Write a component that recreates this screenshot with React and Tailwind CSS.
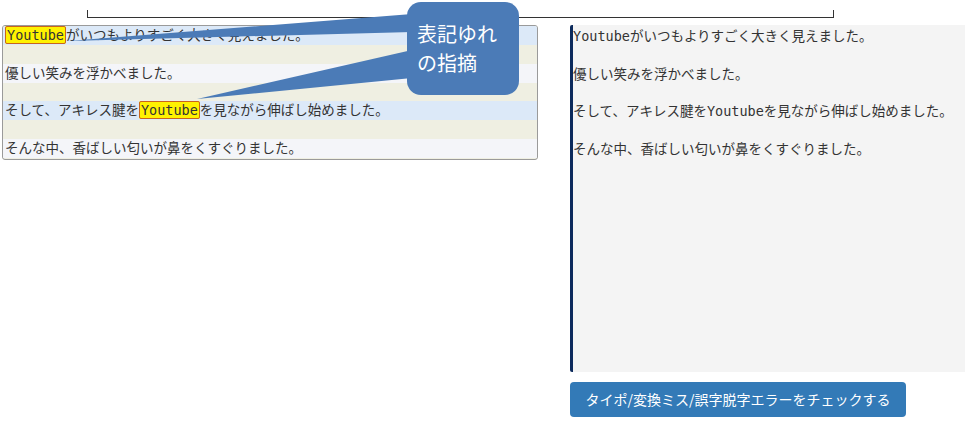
const mono = { fontFamily: '"DejaVu Sans Mono", "Noto Sans CJK JP", monospace' };

function Hl({ children }) {
  return (
    <span className="bg-[#fff200] border border-[#c8641e] rounded-[2px] px-px">{children}</span>
  );
}

const lines = [
  <><Hl>Youtube</Hl>がいつもよりすごく大きく見えました。</>,
  <>優しい笑みを浮かべました。</>,
  <>そして、アキレス腱を<Hl>Youtube</Hl>を見ながら伸ばし始めました。</>,
  <>そんな中、香ばしい匂いが鼻をくすぐりました。</>,
];

const plain = [
  'Youtubeがいつもよりすごく大きく見えました。',
  '優しい笑みを浮かべました。',
  'そして、アキレス腱をYoutubeを見ながら伸ばし始めました。',
  'そんな中、香ばしい匂いが鼻をくすぐりました。',
];

const rowBg = ['bg-[#dce9f8]', 'bg-[#f4f5f9]', 'bg-[#dce9f8]', 'bg-[#f4f5f9]'];

export default function App() {
  return (
    <div className="relative w-[965px] h-[427px] bg-white overflow-hidden text-[#333]">
      {/* top bracket */}
      <div className="ml-[87px] w-[747px] h-[18px] pt-[10px]">
        <div className="h-[8px] border-l border-r border-b border-[#333]" />
      </div>

      <div className="flex mt-[7px]">
        {/* left: diff view */}
        <div className="ml-[2px] w-[536px] h-[135px] border border-[#9a9a9a] rounded-[3px] overflow-hidden bg-[#efefe2] text-[13.5px]" style={mono}>
          {lines.map((l, i) => (
            <div key={i}>
              <div className={`h-[19px] leading-[19px] pl-[2px] whitespace-nowrap ${rowBg[i]}`}>{l}</div>
              {i < 3 && <div className="h-[18.5px]" />}
            </div>
          ))}
        </div>

        {/* right: editor + button */}
        <div className="ml-[32px] flex-1 flex flex-col">
          <div className="h-[347px] bg-[#f4f4f4] border-l-[3px] border-[#0c2a5c] rounded-l-[2px] pt-[2px] text-[13.5px] flex flex-col gap-[18.5px]" style={mono}>
            {plain.map((t, i) => (
              <div key={i} className="h-[19px] leading-[19px] whitespace-nowrap">{t}</div>
            ))}
          </div>
          <div className="mt-[10px]">
            <button
              className="w-[336px] h-[35px] bg-[#337ab7] rounded-[4px] text-white text-[14px] flex items-center justify-center"
              style={{ fontFamily: '"Noto Sans CJK JP", sans-serif' }}
            >
              タイポ/変換ミス/誤字脱字エラーをチェックする
            </button>
          </div>
        </div>
      </div>

      {/* callout */}
      <svg className="absolute top-0 left-0 pointer-events-none" width="965" height="427">
        <polygon points="412,14 412,32 68,41" fill="#4b7bb7" />
        <polygon points="412,50 412,78 197,99" fill="#4b7bb7" />
      </svg>
      <div
        className="absolute left-[407px] top-[2px] w-[112px] h-[93px] rounded-[14px] bg-[#4b7bb7] text-white text-[20px] leading-[29px] pl-[10px] pt-[17px]"
        style={{ fontFamily: '"Noto Sans CJK JP", sans-serif' }}
      >
        表記ゆれ
        <br />
        の指摘
      </div>
    </div>
  );
}
